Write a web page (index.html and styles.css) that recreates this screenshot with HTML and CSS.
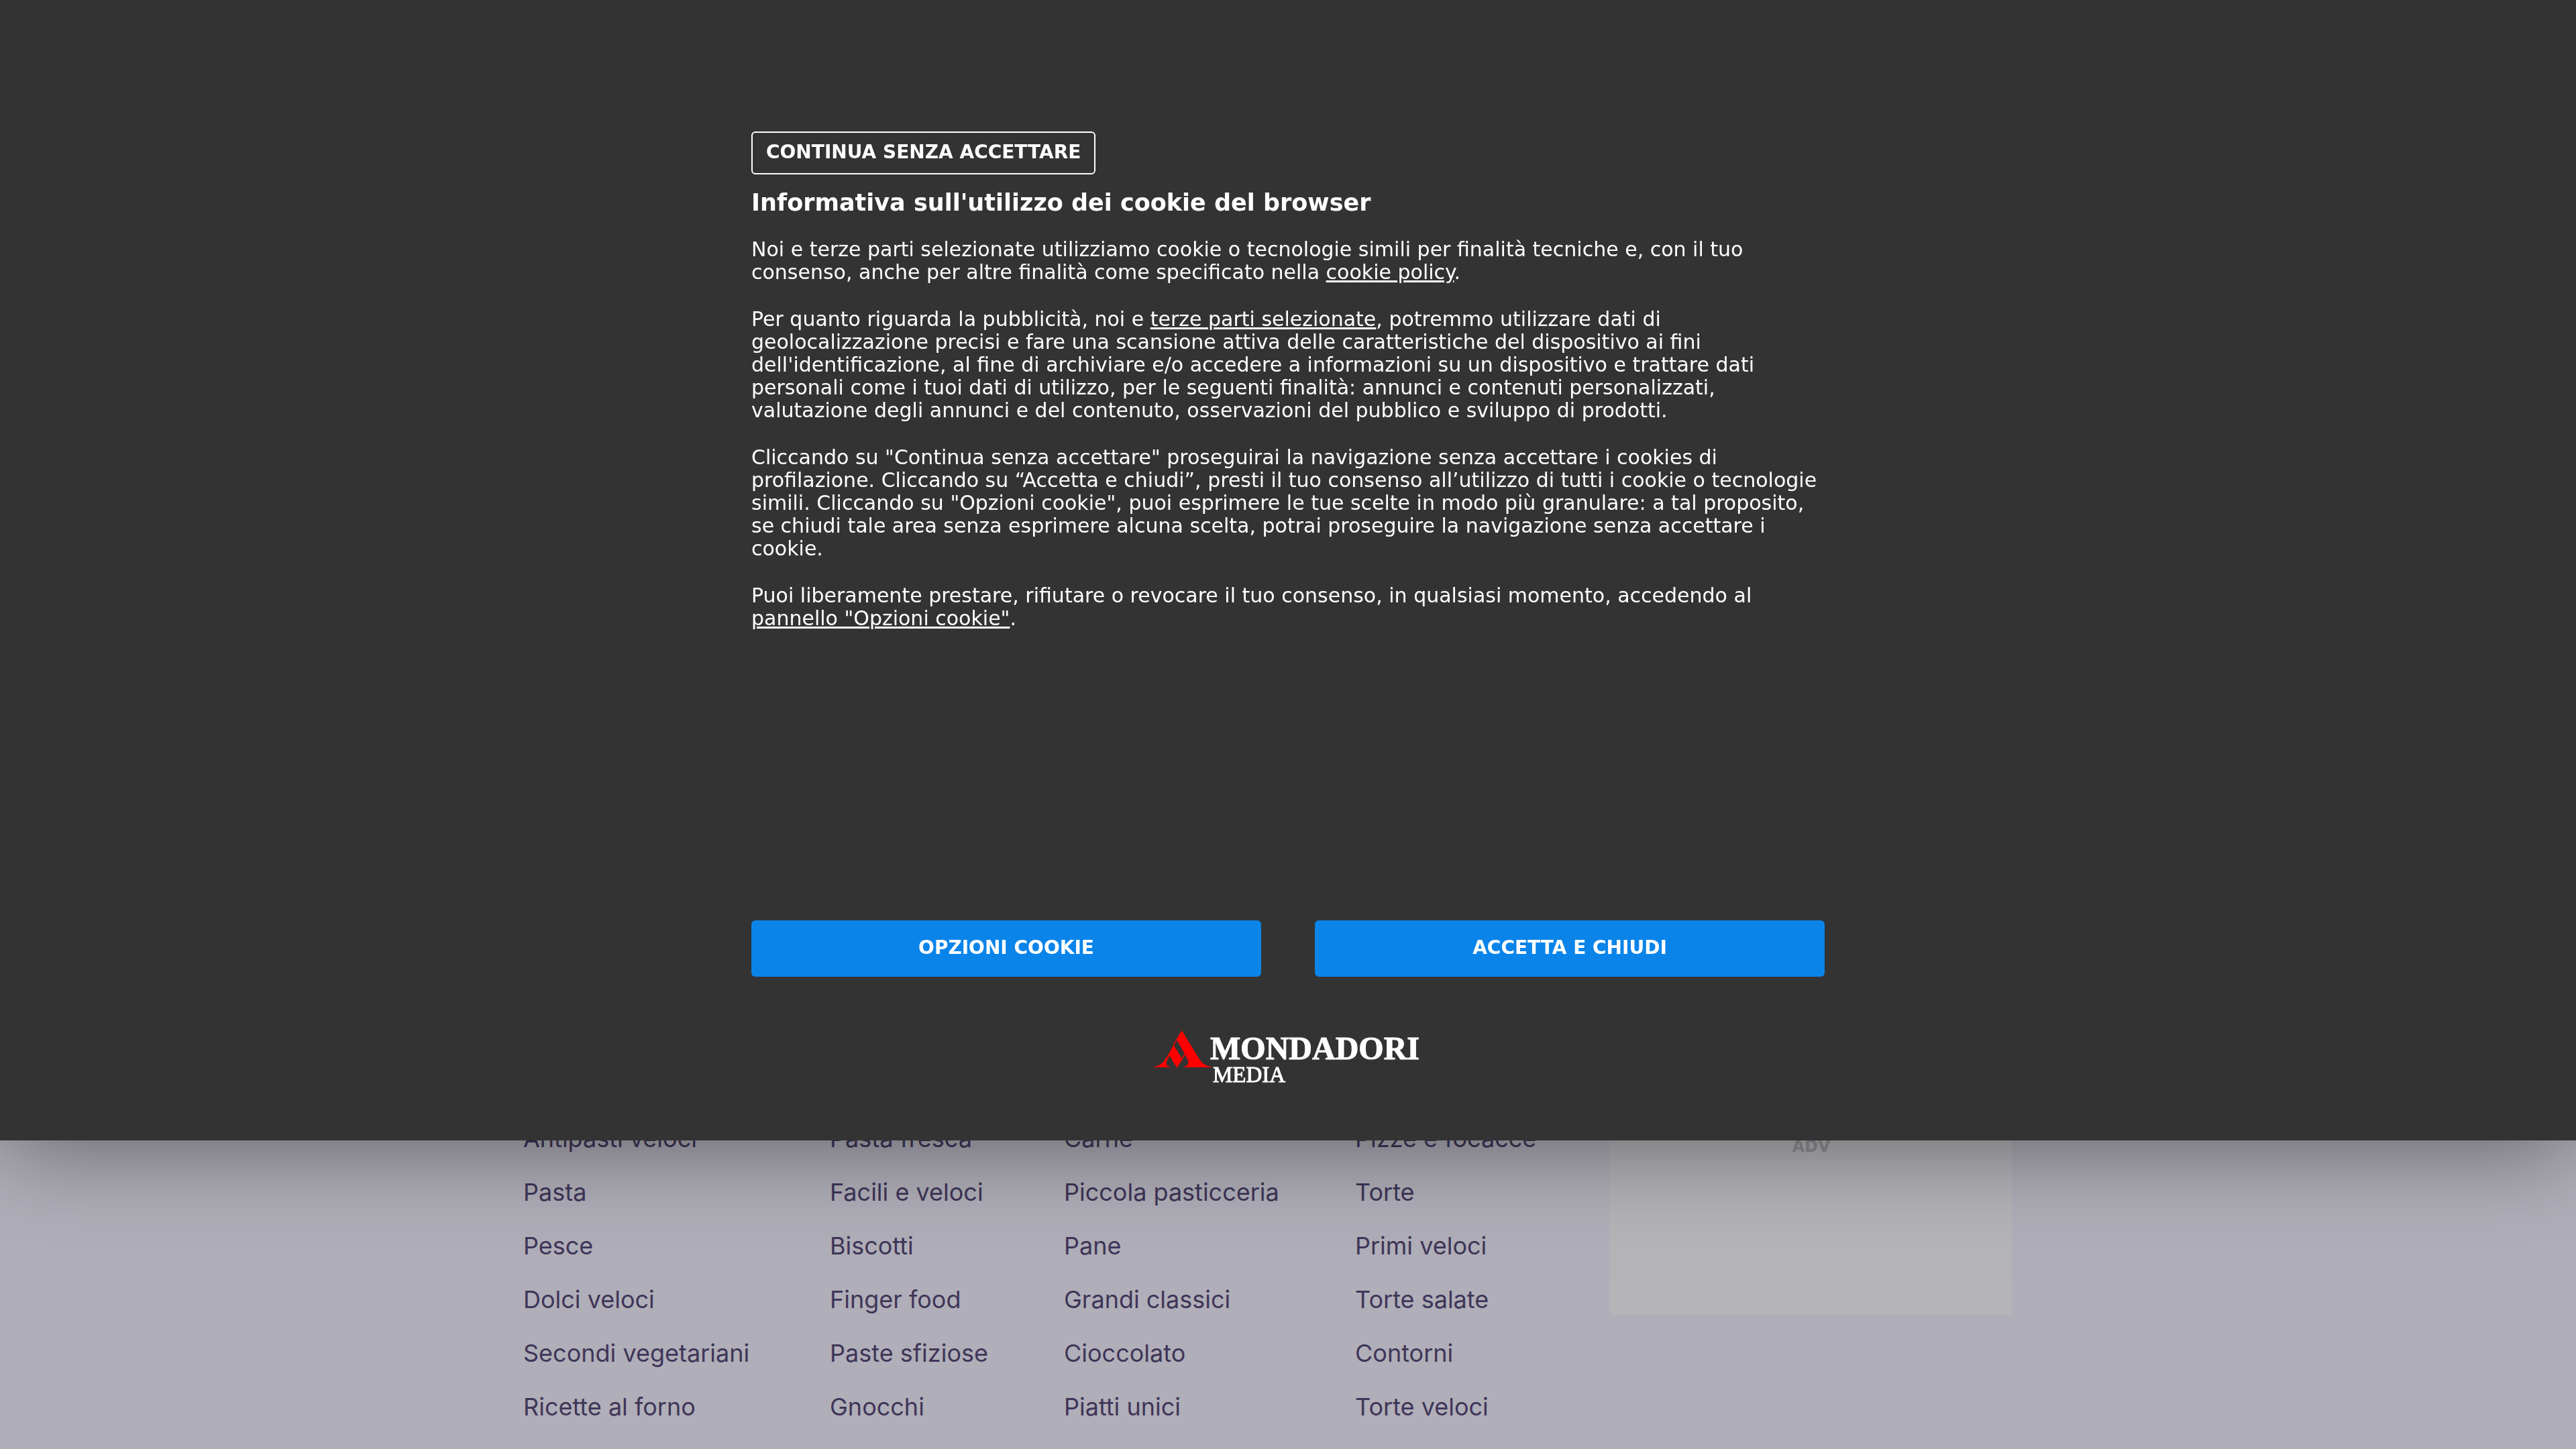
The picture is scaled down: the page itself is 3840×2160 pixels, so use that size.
FILE: index.html
```html
<!DOCTYPE html>
<html lang="it">
<head>
<meta charset="utf-8">
<meta name="viewport" content="width=device-width, initial-scale=1">
<title>Informativa cookie</title>
<link rel="stylesheet" href="styles.css">
</head>
<body>
<main class="page">
  <nav class="categories" aria-label="Categorie">
    <ul class="category-list">
      <li><a href="#">Antipasti veloci</a></li>
      <li><a href="#">Pasta</a></li>
      <li><a href="#">Pesce</a></li>
      <li><a href="#">Dolci veloci</a></li>
      <li><a href="#">Secondi vegetariani</a></li>
      <li><a href="#">Ricette al forno</a></li>
    </ul>
    <ul class="category-list">
      <li><a href="#">Pasta fresca</a></li>
      <li><a href="#">Facili e veloci</a></li>
      <li><a href="#">Biscotti</a></li>
      <li><a href="#">Finger food</a></li>
      <li><a href="#">Paste sfiziose</a></li>
      <li><a href="#">Gnocchi</a></li>
    </ul>
    <ul class="category-list">
      <li><a href="#">Carne</a></li>
      <li><a href="#">Piccola pasticceria</a></li>
      <li><a href="#">Pane</a></li>
      <li><a href="#">Grandi classici</a></li>
      <li><a href="#">Cioccolato</a></li>
      <li><a href="#">Piatti unici</a></li>
    </ul>
    <ul class="category-list">
      <li><a href="#">Pizze e focacce</a></li>
      <li><a href="#">Torte</a></li>
      <li><a href="#">Primi veloci</a></li>
      <li><a href="#">Torte salate</a></li>
      <li><a href="#">Contorni</a></li>
      <li><a href="#">Torte veloci</a></li>
    </ul>
  </nav>
  <aside class="ad">ADV</aside>
</main>

<section class="consent" role="dialog" aria-labelledby="consent-title">
  <div class="consent-inner">
    <button class="button-outline" type="button">CONTINUA SENZA ACCETTARE</button>
    <h1 class="consent-title" id="consent-title">Informativa sull'utilizzo dei cookie del browser</h1>
    <div class="consent-text">
      <p>Noi e terze parti selezionate utilizziamo cookie o tecnologie simili per finalità tecniche e, con il tuo consenso, anche per altre finalità come specificato nella <a href="#">cookie policy</a>.</p>
      <p>Per quanto riguarda la pubblicità, noi e <a href="#">terze parti selezionate</a>, potremmo utilizzare dati di geolocalizzazione precisi e fare una scansione attiva delle caratteristiche del dispositivo ai fini dell'identificazione, al fine di archiviare e/o accedere a informazioni su un dispositivo e trattare dati personali come i tuoi dati di utilizzo, per le seguenti finalità: annunci e contenuti personalizzati, valutazione degli annunci e del contenuto, osservazioni del pubblico e sviluppo di prodotti.</p>
      <p>Cliccando su "Continua senza accettare" proseguirai la navigazione senza accettare i cookies di profilazione. Cliccando su “Accetta e chiudi”, presti il tuo consenso all’utilizzo di tutti i cookie o tecnologie simili. Cliccando su "Opzioni cookie", puoi esprimere le tue scelte in modo più granulare: a tal proposito, se chiudi tale area senza esprimere alcuna scelta, potrai proseguire la navigazione senza accettare i cookie.</p>
      <p>Puoi liberamente prestare, rifiutare o revocare il tuo consenso, in qualsiasi momento, accedendo al <a href="#">pannello "Opzioni cookie"</a>.</p>
    </div>
    <div class="consent-actions">
      <button class="button-primary" type="button">OPZIONI COOKIE</button>
      <button class="button-primary" type="button">ACCETTA E CHIUDI</button>
    </div>
    <svg class="logo" viewBox="0 0 400 84" role="img" aria-label="Mondadori Media">
      <g fill="#fe0000">
        <path d="M41.700 0 L68.300 43.500 Q74.500 53 86 54.200 V55 H45 V54.200 Q54.500 52 50 42.500 L34.500 14.500 L30 22.500 L29 21 Z"/>
        <path d="M29.300 21.500 L41.500 41.500 L45.800 34.800 L46.800 36 L34.500 56 L22 35.500 Z"/>
        <path d="M22.500 34.800 L23.500 37.500 Q13.500 53 24.500 54.200 V55 H0 V54.200 Q10.500 53 16.500 43.500 Z"/>
      </g>
      <text class="logo-name" x="84" y="43">MONDADORI</text>
      <text class="logo-division" x="88" y="77">MEDIA</text>
    </svg>
  </div>
</section>
</body>
</html>
```
FILE: styles.css
```css
* {
  box-sizing: border-box;
}

body {
  margin: 0;
  background: #b0aeb8;
  overflow: hidden;
}

/* Page behind the consent panel */
.page {
  display: flex;
  width: 2280px;
  max-width: 100%;
  margin: 0 auto;
  padding-top: 1657px;
}

.categories {
  display: grid;
  grid-template-columns: 457px 349px 434px 380px;
}

.category-list {
  margin: 0;
  padding: 0;
  list-style: none;
  font: 400 36px/80px Inter, sans-serif;
}

.category-list a {
  color: #3f3558;
  text-decoration: none;
}

.ad {
  flex: 0 0 600px;
  height: 303px;
  padding-top: 35px;
  background: #b5b4b9;
  color: #929196;
  font: 700 24px/34px "DejaVu Sans", sans-serif;
  text-align: center;
}

/* Consent panel */
.consent {
  position: fixed;
  top: 0;
  left: 0;
  right: 0;
  padding: 196px 40px 80px;
  background: #333;
  box-shadow: 0 0 140px rgba(0, 0, 0, 0.5);
  color: #fff;
  font-family: "DejaVu Sans", sans-serif;
}

.consent-inner {
  display: flex;
  flex-direction: column;
  align-items: flex-start;
  max-width: 1600px;
  margin: 0 auto;
}

.button-outline {
  height: 64px;
  padding: 0 20px 2px;
  border: 2px solid #fff;
  border-radius: 6px;
  background: transparent;
  color: #fff;
  font: 700 28px/34px "DejaVu Sans", sans-serif;
}

.consent-title {
  margin: 20px 0 31px;
  font-size: 35px;
  line-height: 44px;
}

.consent-text {
  min-height: 1017px;
  font-size: 30px;
  line-height: 34px;
}

.consent-text p {
  margin: 0 0 36px;
}

.consent-text a {
  color: #fff;
}

.consent-actions {
  display: grid;
  grid-template-columns: 1fr 1fr;
  gap: 80px;
  width: 100%;
}

.button-primary {
  height: 84px;
  padding: 0 20px 2px;
  border: 0;
  border-radius: 6px;
  background: #0a84e9;
  color: #fff;
  font: 700 28px/34px "DejaVu Sans", sans-serif;
}

.logo {
  width: 400px;
  height: 84px;
  margin-top: 80px;
  align-self: center;
}

.logo text {
  fill: #fff;
  stroke: #fff;
  stroke-width: 1px;
  font-family: "Liberation Serif", serif;
}

.logo-name {
  font-size: 48px;
  font-weight: 700;
}

.logo-division {
  font-size: 33px;
}
```
